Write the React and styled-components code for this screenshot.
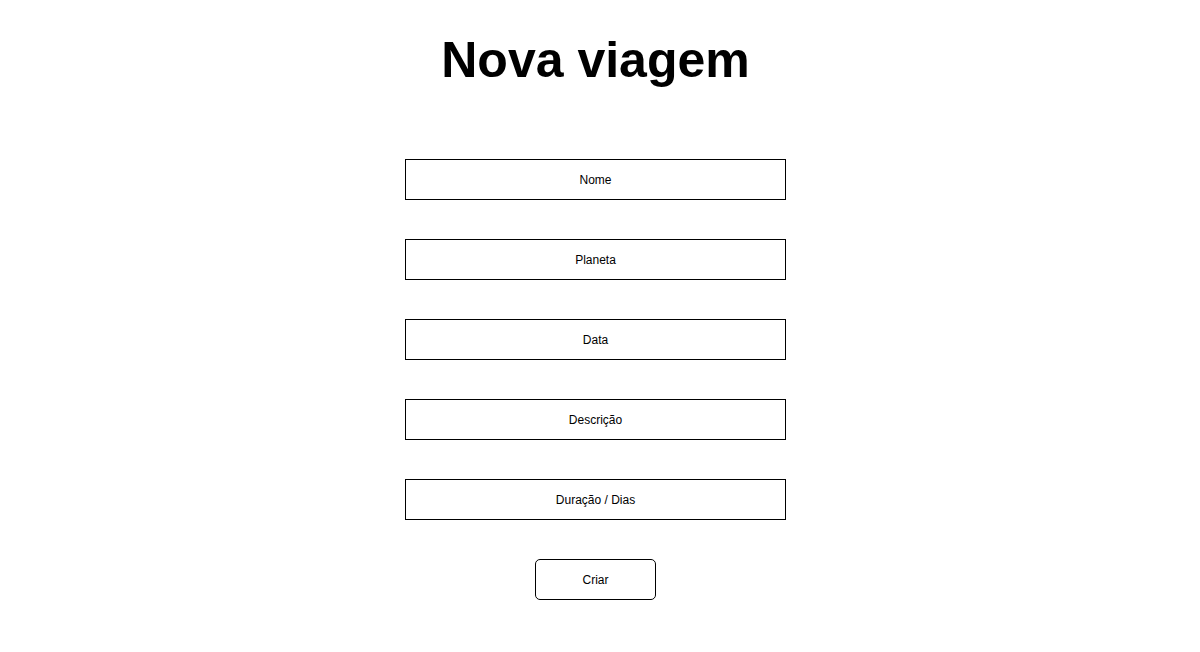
import React from 'react';
import styled, { createGlobalStyle } from 'styled-components';

const GlobalStyle = createGlobalStyle`
  html, body {
    margin: 0;
    padding: 0;
    background: #ffffff;
    font-family: "Liberation Sans", Arial, sans-serif;
  }
`;

const PageContainer = styled.div`
  display: flex;
  flex-direction: column;
  align-items: center;
  padding: 31px 9px 0 0;
`;

const Title = styled.h1`
  margin: 0;
  font-size: 50px;
  font-weight: bold;
  color: #000;
`;

const Form = styled.form`
  display: flex;
  flex-direction: column;
  align-items: center;
  gap: 39px;
  margin-top: 70px;
`;

const Field = styled.input`
  box-sizing: border-box;
  width: 381px;
  height: 41px;
  border: 1px solid #000;
  border-radius: 0;
  background: #fff;
  text-align: center;
  font-family: "Liberation Sans", Arial, sans-serif;
  font-size: 12px;
  color: #000;
  outline: none;

  &::placeholder {
    color: #000;
    opacity: 1;
  }
`;

const SubmitButton = styled.button`
  box-sizing: border-box;
  width: 121px;
  height: 41px;
  border: 1px solid #000;
  border-radius: 5px;
  background: #fff;
  font-family: "Liberation Sans", Arial, sans-serif;
  font-size: 12px;
  color: #000;
  cursor: pointer;
`;

const fields = ['Nome', 'Planeta', 'Data', 'Descrição', 'Duração / Dias'];

const App = () => {
  return (
    <>
      <GlobalStyle />
      <PageContainer>
        <Title>Nova viagem</Title>
        <Form onSubmit={(e) => e.preventDefault()}>
          {fields.map((label) => (
            <Field key={label} placeholder={label} />
          ))}
          <SubmitButton type="submit">Criar</SubmitButton>
        </Form>
      </PageContainer>
    </>
  );
};

export default App;
